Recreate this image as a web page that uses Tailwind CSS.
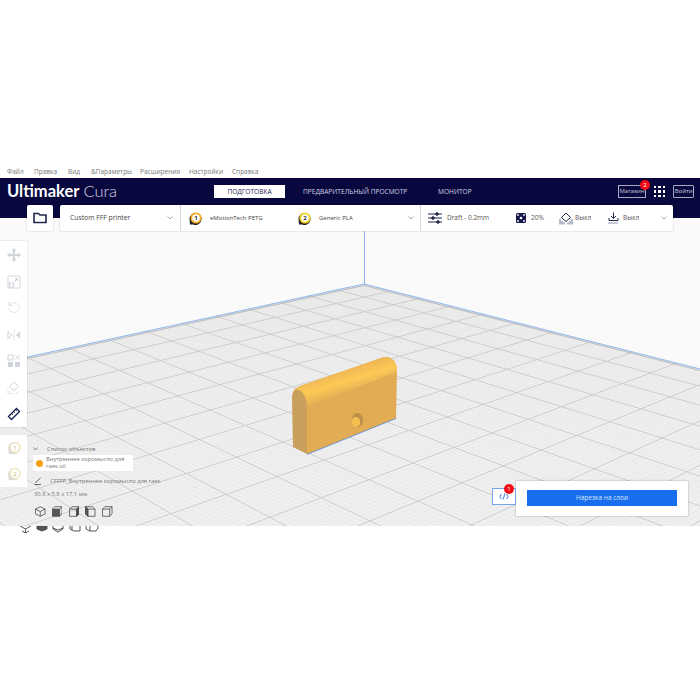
<!DOCTYPE html>
<html lang="ru">
<head>
    <meta charset="UTF-8">
    <title>Ultimaker Cura</title>
    <script src="https://cdn.jsdelivr.net/npm/@tailwindcss/browser@4"></script>
</head>
<body class="bg-white w-[700px] h-[700px] overflow-hidden font-['Open_Sans',sans-serif]">

    <div class="h-[165px]"></div>

    <!-- Menu bar -->
    <div class="h-[13px] relative text-[6.5px] leading-[13px] text-[#777]">
        <div class="flex pl-[7px]">
            <span class="w-[27px]">Файл</span>
            <span class="w-[34px]">Правка</span>
            <span class="w-[23px]">Вид</span>
            <span class="w-[49px]">&amp;Параметры</span>
            <span class="w-[49px]">Расширения</span>
            <span class="w-[43px]">Настройки</span>
            <span>Справка</span>
        </div>
    </div>

    <!-- Header -->
    <div class="h-[40px] bg-[#08083f] flex items-start pl-[7px] text-white">
        <div class="w-[207px] h-[27px] flex items-center text-[16.5px] leading-none font-['Lato',sans-serif]">
            <span class="font-bold">Ultimaker</span>
            <span class="font-light ml-[4px] text-[#d5d6e4]">Cura</span>
        </div>
        <div class="mt-[7px] w-[71px] h-[13px] bg-white text-[#1d2150] text-[6.6px] flex items-center justify-center">ПОДГОТОВКА</div>
        <div class="ml-[18px] mt-[7px] w-[105px] h-[13px] text-[#d4d5e4] text-[6.6px] leading-[13px] whitespace-nowrap">ПРЕДВАРИТЕЛЬНЫЙ ПРОСМОТР</div>
        <div class="ml-[30px] mt-[7px] w-[34px] h-[13px] text-[#d4d5e4] text-[6.6px] leading-[13px]">МОНИТОР</div>
        <div class="ml-[146px] mt-[7px] w-[28px] h-[13px] border border-[#a9abc4] text-[#c9cadb] text-[6px] flex items-center justify-center relative">
            Магазин
            <span class="absolute -top-[6px] -right-[5px] w-[10px] h-[10px] rounded-full bg-[#f20d16] text-white text-[6px] flex items-center justify-center">2</span>
        </div>
        <div class="ml-[8px] mt-[8px] grid grid-cols-3 gap-[2px]">
            <i class="w-[2.4px] h-[2.4px] bg-white"></i><i class="w-[2.4px] h-[2.4px] bg-white"></i><i class="w-[2.4px] h-[2.4px] bg-white"></i>
            <i class="w-[2.4px] h-[2.4px] bg-white"></i><i class="w-[2.4px] h-[2.4px] bg-white"></i><i class="w-[2.4px] h-[2.4px] bg-white"></i>
            <i class="w-[2.4px] h-[2.4px] bg-white"></i><i class="w-[2.4px] h-[2.4px] bg-white"></i><i class="w-[2.4px] h-[2.4px] bg-white"></i>
        </div>
        <div class="ml-[8px] mt-[7px] w-[21px] h-[13px] border border-[#a9abc4] rounded-[1px] text-[#c9cadb] text-[6px] flex items-center justify-center">Войти</div>
    </div>

    <!-- 3D viewport -->
    <div class="h-[308px] bg-[#fafafa] relative">
        <svg id="floor" class="absolute inset-0" width="700" height="308" viewBox="0 218 700 308">
            <defs>
                <linearGradient id="topFace" gradientUnits="userSpaceOnUse" x1="347" y1="395" x2="340" y2="372">
                    <stop offset="0" stop-color="#e2ac55"/>
                    <stop offset="0.55" stop-color="#fdc955"/>
                    <stop offset="1" stop-color="#f0b955"/>
                </linearGradient>
            </defs>
            <polygon points="364,284 0,363 0,526 700,526 700,369" fill="#f0f0f0"/>
            <g id="minor" stroke="#e2e2e2" stroke-width="0.3"></g>
            <g id="major" stroke="#c8c8c8" stroke-width="0.9"></g>
            <path d="M364 285.500 L0 364.500 M364 285.500 L700 370.500" stroke="#bdbdbd" stroke-width="1.200" fill="none"/>
            <path d="M364 284 L0 363 M364 284 L700 369 M364.500 231 V284" stroke="#80aef2" stroke-width="0.900" fill="none"/>

            <!-- model -->
            <path d="M307 454 L396 418" stroke="#5d8fe0" stroke-width="1.500" fill="none"/>
            <path d="M293 395 C293 389 296 388 300 386 L384 357 C392 356 397 362 397 370 L396 418 L307 454 L307 408 C306 398 302 391 293 395Z" fill="#e2ac55"/>
            <path d="M295 390 C297 388 299 387 301 386 L384 357 C392 356 397 362 397 370 L397 372 L308 406 C306 396 302 390 295 390Z" fill="url(#topFace)"/>
            <path d="M292 397 C292 391 296 389 299 390 C304 392 307 400 307 410 L307 454 L293 447Z" fill="#c99f5c"/>
            <ellipse cx="357.500" cy="420" rx="5.500" ry="7" fill="#b98f4a"/>
            <ellipse cx="356" cy="422" rx="4.300" ry="5" fill="#f3bd50"/>
        </svg>

        <!-- Folder button -->
        <div class="absolute left-[27px] top-[-13px] w-[26px] h-[26px] bg-white rounded-[2px] shadow-[0_0_2px_rgba(0,0,0,0.25)] flex items-center justify-center">
            <svg width="14" height="12" viewBox="0 0 14 12" fill="none" stroke="#23264f" stroke-width="1.600"><path d="M1 10.500V1.500H5.500L7 3H13V10.500Z"/></svg>
        </div>

        <!-- Main toolbar -->
        <div class="absolute left-[60px] top-[-13px] w-[613px] h-[26px] bg-white rounded-[2px] shadow-[0_0_2px_rgba(0,0,0,0.25)] flex text-[#555]">
            <div class="w-[121px] border-r border-[#d8d8d8] flex items-center pl-[10px] text-[6.8px] text-[#444] relative">
                Custom FFF printer
                <svg class="absolute left-[107px] top-[11px]" width="6" height="4" viewBox="0 0 6 4" fill="none" stroke="#888" stroke-width="0.700"><path d="M0.500 0.500L3 3L5.500 0.500"/></svg>
            </div>
            <div class="w-[240px] border-r border-[#d8d8d8] flex items-center text-[6px] text-[#444] relative">
                <svg class="ml-[7px]" width="15" height="15" viewBox="0 0 15 15"><path d="M2 13.500L1.500 8A6 6 0 1 1 5 13.500Z" fill="#222"/><circle cx="8" cy="7" r="5.600" fill="#f5ab1e"/><circle cx="8" cy="7" r="3.800" fill="#fff"/><text x="8" y="9" font-size="6" font-weight="700" text-anchor="middle" fill="#333">1</text></svg>
                <span class="ml-[7px] w-[87px]">eMotionTech PETG</span>
                <svg width="15" height="15" viewBox="0 0 15 15"><path d="M2 13.500L1.500 8A6 6 0 1 1 5 13.500Z" fill="#222"/><circle cx="8" cy="7" r="5.600" fill="#f5d21e"/><circle cx="8" cy="7" r="3.800" fill="#fff"/><text x="8" y="9" font-size="6" font-weight="700" text-anchor="middle" fill="#333">2</text></svg>
                <span class="ml-[7px]">Generic PLA</span>
                <svg class="absolute left-[227px] top-[11px]" width="6" height="4" viewBox="0 0 6 4" fill="none" stroke="#888" stroke-width="0.700"><path d="M0.500 0.500L3 3L5.500 0.500"/></svg>
            </div>
            <div class="flex-1 flex items-center text-[6.5px] relative">
                <svg class="ml-[7px]" width="14" height="12" viewBox="0 0 14 12" stroke="#23264f" stroke-width="1" fill="#23264f"><path d="M0 2H14M0 6H14M0 10H14" fill="none"/><circle cx="9" cy="2" r="1.300"/><circle cx="5" cy="6" r="1.300"/><circle cx="10" cy="10" r="1.300"/></svg>
                <span class="ml-[5px] w-[69px] text-[#555]">Draft - 0.2mm</span>
                <svg width="10" height="10" viewBox="0 0 10 10"><rect width="10" height="10" rx="1.500" fill="#14174a"/><circle cx="5" cy="5" r="1.300" fill="#fff"/><circle cx="2" cy="2" r="0.900" fill="#fff"/><circle cx="8" cy="2" r="0.900" fill="#fff"/><circle cx="2" cy="8" r="0.900" fill="#fff"/><circle cx="8" cy="8" r="0.900" fill="#fff"/></svg>
                <span class="ml-[5px] w-[28px]">20%</span>
                <svg width="14" height="13" viewBox="0 0 14 13" fill="none" stroke="#23264f" stroke-width="1"><path d="M7 1L11.500 5.500L7 9.500L2.500 5.500Z"/><path d="M1 12.500V7M3 12.500V9M5 12.500V10.500M9 12.500V10.500M11 12.500V9M13 12.500V7" stroke="#6d7096"/></svg>
                <span class="ml-[2px] w-[33px]">Выкл</span>
                <svg width="11" height="12" viewBox="0 0 11 12" fill="none" stroke="#23264f" stroke-width="1"><path d="M5.500 0.500V6M3 4L5.500 6.500L8 4M1 6V8.500H10V6"/><path d="M0.500 11H10.500" stroke-dasharray="1 1"/></svg>
                <span class="ml-[4px]">Выкл</span>
                <svg class="absolute left-[240px] top-[11px]" width="6" height="4" viewBox="0 0 6 4" fill="none" stroke="#888" stroke-width="0.700"><path d="M0.500 0.500L3 3L5.500 0.500"/></svg>
            </div>
        </div>

        <!-- Left tool panel -->
        <div class="absolute left-0 top-[23px] w-[27px] h-[186px] bg-white shadow-[0_0_1px_rgba(0,0,0,0.3)] flex flex-col items-center pt-[7px] gap-[12.500px]">
            <svg width="14" height="14" viewBox="0 0 14 14" fill="#cfd3da"><path d="M7 0L9.500 3H8V6H11V4.500L14 7L11 9.500V8H8V11H9.500L7 14L4.500 11H6V8H3V9.500L0 7L3 4.500V6H6V3H4.500Z"/></svg>
            <svg width="14" height="14" viewBox="0 0 14 14" fill="none" stroke="#d2d5dc" stroke-width="1"><rect x="1" y="1" width="12" height="12" rx="1"/><rect x="2.500" y="8" width="4" height="4"/><path d="M7 7L10.500 3.500M8 3.500H10.500V6"/></svg>
            <svg width="14" height="14" viewBox="0 0 14 14" fill="none" stroke="#d5d8de" stroke-width="1"><path d="M3 3.500A5 5 0 1 1 2 7" stroke-dasharray="1.500 0.800"/><path d="M2 1V4.500H5.500" stroke-dasharray="none"/></svg>
            <svg width="14" height="14" viewBox="0 0 14 14"><path d="M1 3.500L5 7L1 10.500Z" fill="none" stroke="#cfd3da"/><path d="M13 3.500L9 7L13 10.500Z" fill="#cfd3da"/><path d="M7 1V13" stroke="#cfd3da" stroke-dasharray="1.500 1"/></svg>
            <svg width="14" height="14" viewBox="0 0 14 14" fill="#cfd3da"><rect x="1" y="1" width="5" height="5" fill="none" stroke="#cfd3da"/><path d="M8.500 1.500L12.500 5.500M12.500 1.500L8.500 5.500" stroke="#cfd3da"/><rect x="1" y="8" width="5" height="5"/><rect x="8" y="8" width="5" height="5"/></svg>
            <svg width="14" height="14" viewBox="0 0 14 14" fill="none" stroke="#cfd3da" stroke-width="1"><path d="M7 1L11.500 5.500L7 9.500L2.500 5.500Z"/><path d="M1 13V8.500M3 13V10.500M5 13V12M9 13L12.500 10" stroke-dasharray="1 0.600"/></svg>
            <svg width="14" height="14" viewBox="0 0 14 14" fill="none" stroke="#171a50" stroke-width="1.300"><path d="M1.500 9.500L9.500 1.500L12.500 4.500L4.500 12.500Z"/><path d="M4.500 6.500L6 8M6.500 4.500L8 6M8.500 2.500L10 4" stroke-width="0.800"/></svg>
        </div>

        <!-- Material panel -->
        <div class="absolute left-0 top-[217px] w-[27px] h-[52px] bg-white flex flex-col items-center pt-[5px] gap-[10px]">
            <svg width="16" height="16" viewBox="0 0 16 16"><path d="M3 14L2 8A6 6 0 1 1 6 14Z" fill="#d8d8d8"/><circle cx="9" cy="7.500" r="5.800" fill="#f3e3c4"/><circle cx="9" cy="7.500" r="4" fill="#fff"/><text x="9" y="9.700" font-size="6" text-anchor="middle" fill="#c2a56a">1</text></svg>
            <svg width="16" height="16" viewBox="0 0 16 16"><path d="M3 14L2 8A6 6 0 1 1 6 14Z" fill="#d8d8d8"/><circle cx="9" cy="7.500" r="5.800" fill="#f3ecc4"/><circle cx="9" cy="7.500" r="4" fill="#fff"/><text x="9" y="9.700" font-size="6" text-anchor="middle" fill="#c2b36a">2</text></svg>
        </div>

        <!-- Object list -->
        <div class="absolute left-[33px] top-[225px] w-[160px] text-[5.800px] text-[#777]">
            <div class="h-[12px] flex items-center">
                <svg class="shrink-0" width="5" height="4" viewBox="0 0 5 4" fill="none" stroke="#555" stroke-width="0.700"><path d="M0.500 0.500L2.500 3L4.500 0.500"/></svg>
                <span class="ml-[9px]">Список объектов</span>
            </div>
            <div class="w-[100px] h-[16px] bg-white flex items-center whitespace-nowrap">
                <span class="ml-[3px] w-[7px] h-[7px] shrink-0 rounded-full bg-[#f9a016]"></span>
                <span class="ml-[3px] leading-[7.500px] text-[#777]">Внутреннее коромысло для<br>гаек.stl</span>
            </div>
            <div class="h-[20px] flex items-center whitespace-nowrap">
                <svg class="ml-[1px] shrink-0" width="8" height="8" viewBox="0 0 8 8" fill="none" stroke="#444" stroke-width="0.800"><path d="M1 6L6.500 1M0.500 7.500H7"/></svg>
                <span class="ml-[8px] text-[#777]">CFFFP_Внутреннее коромысло для гаек</span>
            </div>
            <div class="mt-[-1px] ml-[1px] h-[8px] leading-[8px]">30.8 x 5.8 x 17.1 мм</div>
            <div class="mt-[8px] ml-[2px] flex gap-[6.300px]">
                <svg width="10.500" height="11" viewBox="0 0 11 11" fill="none" stroke="#444" stroke-width="0.800"><path d="M5.500 0.500L10.500 3V8L5.500 10.500L0.500 8V3ZM0.500 3L5.500 5.500L10.500 3M5.500 5.500V10.500"/></svg>
                <svg width="10.500" height="11" viewBox="0 0 11 11" stroke="#444" stroke-width="0.800"><path d="M0.500 3H8V10.500H0.500Z" fill="#555"/><path d="M0.500 3L3 0.500H10.500V8L8 10.500M8 3L10.500 0.500" fill="none"/></svg>
                <svg width="10.500" height="11" viewBox="0 0 11 11" fill="none" stroke="#444" stroke-width="0.800"><path d="M0.500 3H8V10.500H0.500ZM0.500 3L3 0.500H10.500V8L8 10.500M8 3L10.500 0.500"/><path d="M8 3L10.500 0.500V8L8 10.500Z" fill="#555"/></svg>
                <svg width="10.500" height="11" viewBox="0 0 11 11" fill="none" stroke="#444" stroke-width="0.800"><path d="M3 3H10.500V10.500H3ZM3 3L0.500 0.500H8L10.500 3M3 10.500L0.500 8V0.500"/><path d="M0.500 0.500L3 3V10.500L0.500 8Z" fill="#555"/></svg>
                <svg width="10.500" height="11" viewBox="0 0 11 11" fill="none" stroke="#444" stroke-width="0.800"><path d="M0.500 3H8V10.500H0.500ZM0.500 3L3 0.500H10.500V8L8 10.500M8 3L10.500 0.500"/></svg>
            </div>
        </div>

        <!-- Slice panel -->
        <div class="absolute left-[492px] top-[263px] flex items-start">
            <div class="mt-[7px] w-[24px] h-[17px] bg-white border border-[#78a4ec] flex items-center justify-center relative">
                <svg width="10" height="7" viewBox="0 0 10 7" fill="none" stroke="#3f7fe8" stroke-width="1"><path d="M2.500 1L0.800 3.500L2.500 6M7.500 1L9.200 3.500L7.500 6M5.800 0.500L4.200 6.500"/></svg>
                <span class="absolute -top-[5px] right-[1px] w-[10px] h-[10px] rounded-full bg-[#f20d16] text-white text-[6px] flex items-center justify-center">1</span>
            </div>
            <div class="w-[172px] h-[35px] bg-white shadow-[0_0_2px_rgba(0,0,0,0.3)] pl-[11px] pt-[9px]">
                <div class="w-[150px] h-[16px] bg-[#196ef0] text-[#dce8fc] text-[6.5px] flex items-center justify-center">Нарезка на слои</div>
            </div>
        </div>
    </div>

    <!-- View icons cut off by the bottom edge of the screenshot -->
    <div class="h-[7px] pl-[20px] overflow-hidden">
        <svg width="80" height="7" viewBox="0 0 80 7" fill="none" stroke="#444" stroke-width="0.900">
            <path d="M0 0L5.500 3L11 0M5.500 3V7M2 5L5.500 7L9 5"/>
            <path d="M17 0L17 3L22 5L27 3V0Z" fill="#555"/>
            <path d="M33 0V3L38 6L43 3V0M33 2L38 4L43 2"/>
            <path d="M50 0V3L54 5H60V0M52 4V0"/>
            <path d="M66 0V3L70 5H76L78 2V0M70 0V5"/>
        </svg>
    </div>

    <script>
        // perspective grid of the build plate
        const A = [364, 284], VR = [1581, 20], VL = [-680, 20];
        const C = 0.0217, D = 0.0256;

        function project(u, v) {
            const a = C * u, b = D * v, w = 1 - a - b;
            return [(A[0] - a * VR[0] - b * VL[0]) / w, (A[1] - a * VR[1] - b * VL[1]) / w];
        }

        function addLine(group, p, q) {
            const l = document.createElementNS('http://www.w3.org/2000/svg', 'line');
            l.setAttribute('x1', p[0]); l.setAttribute('y1', p[1]);
            l.setAttribute('x2', q[0]); l.setAttribute('y2', q[1]);
            group.appendChild(l);
        }

        const major = document.getElementById('major');
        const minor = document.getElementById('minor');
        for (let i = 1; i < 300; i++) {
            const t = i / 10;
            const group = i % 10 === 0 ? major : minor;
            const maxU = (0.9 - D * t) / C;
            const maxV = (0.9 - C * t) / D;
            if (maxU > 0) addLine(group, project(0, t), project(maxU, t));
            if (maxV > 0) addLine(group, project(t, 0), project(t, maxV));
        }
    </script>
</body>
</html>
